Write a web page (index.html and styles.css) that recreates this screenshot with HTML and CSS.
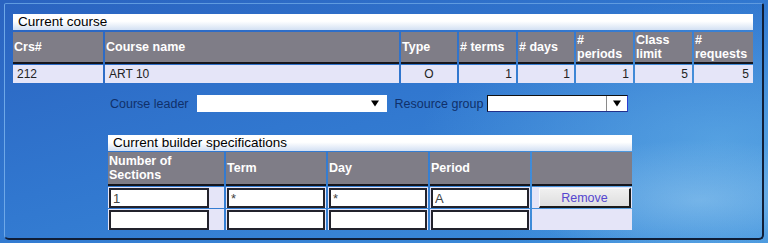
FILE: index.html
```html
<!DOCTYPE html>
<html>
<head>
<meta charset="utf-8">
<link rel="stylesheet" href="styles.css">
</head>
<body>
<div class="panel">
  <section class="course">
    <div class="title">Current course</div>
    <div class="grid course-grid">
      <div class="th">Crs#</div>
      <div class="th">Course name</div>
      <div class="th">Type</div>
      <div class="th"># terms</div>
      <div class="th"># days</div>
      <div class="th">#<br>periods</div>
      <div class="th">Class<br>limit</div>
      <div class="th">#<br>requests</div>
      <div class="td">212</div>
      <div class="td">ART 10</div>
      <div class="td center">O</div>
      <div class="td num">1</div>
      <div class="td num">1</div>
      <div class="td num">1</div>
      <div class="td num">5</div>
      <div class="td num">5</div>
    </div>
  </section>

  <div class="options">
    <span class="lbl">Course leader</span>
    <div class="sel sel-leader">
      <svg class="arrow" width="8" height="7" viewBox="0 0 8 7"><path d="M0 0.5 H8 L4 6.5 Z" fill="#000"/></svg>
    </div>
    <span class="lbl lbl-res">Resource group</span>
    <div class="sel sel-res">
      <span class="sel-btn"><svg width="8" height="7" viewBox="0 0 8 7"><path d="M0 0.5 H8 L4 6.5 Z" fill="#000"/></svg></span>
    </div>
  </div>

  <section class="builder">
    <div class="title">Current builder specifications</div>
    <div class="grid builder-grid">
      <div class="th">Number of<br>Sections</div>
      <div class="th">Term</div>
      <div class="th">Day</div>
      <div class="th">Period</div>
      <div class="th"></div>

      <div class="cell"><input class="inp inp-first" value="1"></div>
      <div class="cell"><input class="inp" value="*"></div>
      <div class="cell"><input class="inp" value="*"></div>
      <div class="cell"><input class="inp" value="A"></div>
      <div class="cell"><button class="btn">Remove</button></div>

      <div class="cell"><input class="inp inp-first" value=""></div>
      <div class="cell"><input class="inp" value=""></div>
      <div class="cell"><input class="inp" value=""></div>
      <div class="cell"><input class="inp" value=""></div>
      <div class="cell"></div>
    </div>
  </section>
</div>
</body>
</html>
```
FILE: styles.css
```css
html, body {
  margin: 0;
  padding: 0;
}
body {
  width: 768px;
  height: 243px;
  overflow: hidden;
  font-family: "Liberation Sans", Arial, sans-serif;
  font-size: 12px;
  background:
    radial-gradient(ellipse 180px 60px at 700px 200px, rgba(170, 215, 245, 0.45), rgba(170, 215, 245, 0) 100%),
    radial-gradient(ellipse 300px 140px at 720px 140px, rgba(120, 195, 240, 0.45), rgba(120, 195, 240, 0) 100%),
    linear-gradient(165deg, #2a63c0 0%, #3177cf 45%, #3d8fdb 100%);
}
.panel {
  box-sizing: border-box;
  width: 760px;
  height: 237px;
  margin: 3px 0 0 4px;
  border-left: 1px solid #6ea8e8;
  border-top: 1px solid #5f9be0;
  border-right: 2px solid #0f1d36;
  border-bottom: 2px solid #0f1d36;
  border-radius: 2px 2px 5px 5px;
  padding: 10px 0 0 8px;
}
.title {
  height: 16px;
  box-sizing: border-box;
  background: linear-gradient(180deg, #ffffff 0%, #ffffff 45%, #d3e0f3 100%);
  color: #000;
  font-size: 13.5px;
  line-height: 16px;
  padding-left: 5px;
  white-space: nowrap;
}
.course {
  width: 740px;
}
.course .title {
  margin-bottom: 2px;
}
.grid {
  display: grid;
  column-gap: 2px;
}
.course-grid {
  grid-template-columns: 90px 294px 56px 57px 56px 57px 57px 59px;
  grid-template-rows: 32px 18px;
  row-gap: 1px;
}
.th {
  box-sizing: border-box;
  background: #7f7d87;
  border-bottom: 2px solid #15151c;
  color: #fff;
  font-weight: bold;
  font-size: 12.5px;
  line-height: 14px;
  padding: 0 1px;
  display: flex;
  flex-direction: column;
  justify-content: center;
  white-space: nowrap;
  overflow: hidden;
}
.td {
  background: #e5e5f8;
  color: #222;
  font-size: 12px;
  line-height: 18px;
  padding: 0 4px;
  white-space: nowrap;
}
.td.center {
  text-align: center;
}
.td.num {
  text-align: right;
}
.options {
  display: flex;
  align-items: center;
  height: 17px;
  margin: 12px 0 0 97px;
}
.lbl {
  color: #10306a;
  font-size: 12.5px;
  white-space: nowrap;
}
.sel {
  box-sizing: border-box;
  height: 17px;
  background: #fff;
  position: relative;
}
.sel-leader {
  width: 190px;
  margin-left: 8px;
  margin-right: 8px;
  display: flex;
  justify-content: flex-end;
  align-items: center;
  padding-right: 8px;
}
.sel-res {
  width: 141px;
  margin-left: 4px;
  border-left: 1px solid #111;
  border-top: 1px solid #111;
  border-bottom: 1px solid #22308a;
  border-right: 1px solid #2b3ed0;
  display: flex;
  justify-content: flex-end;
}
.sel-btn {
  width: 20px;
  border-left: 1px solid #8a8a8a;
  display: flex;
  align-items: center;
  justify-content: center;
}
.builder {
  width: 524px;
  margin: 23px 0 0 95px;
}
.builder .title {
  margin-bottom: 1px;
}
.builder-grid {
  grid-template-columns: 116px 100px 100px 100px 100px;
  grid-template-rows: 34px 21px 21px;
  row-gap: 1px;
}
.builder-grid .th {
  padding: 0 1px;
}
.cell {
  background: #e5e5f8;
  box-sizing: border-box;
  padding: 1px 0 0 1px;
}
.inp {
  box-sizing: border-box;
  width: 98px;
  height: 20px;
  margin: 0;
  border: 2px solid #23232c;
  background: #fff;
  font-family: "Liberation Sans", Arial, sans-serif;
  font-size: 13px;
  color: #444;
  padding: 0 2px;
  outline: none;
}
.inp-first {
  width: 100px;
}
.btn {
  box-sizing: border-box;
  width: 92px;
  height: 20px;
  margin: 0 0 0 6px;
  padding: 0;
  background: linear-gradient(180deg, #f0f0f0 0%, #dedede 100%);
  border-left: 1px solid #fafafa;
  border-top: 1px solid #fafafa;
  border-right: 2px solid #1a1a1a;
  border-bottom: 2px solid #1a1a1a;
  color: #5546cf;
  font-family: "Liberation Sans", Arial, sans-serif;
  font-size: 12.5px;
}
```
